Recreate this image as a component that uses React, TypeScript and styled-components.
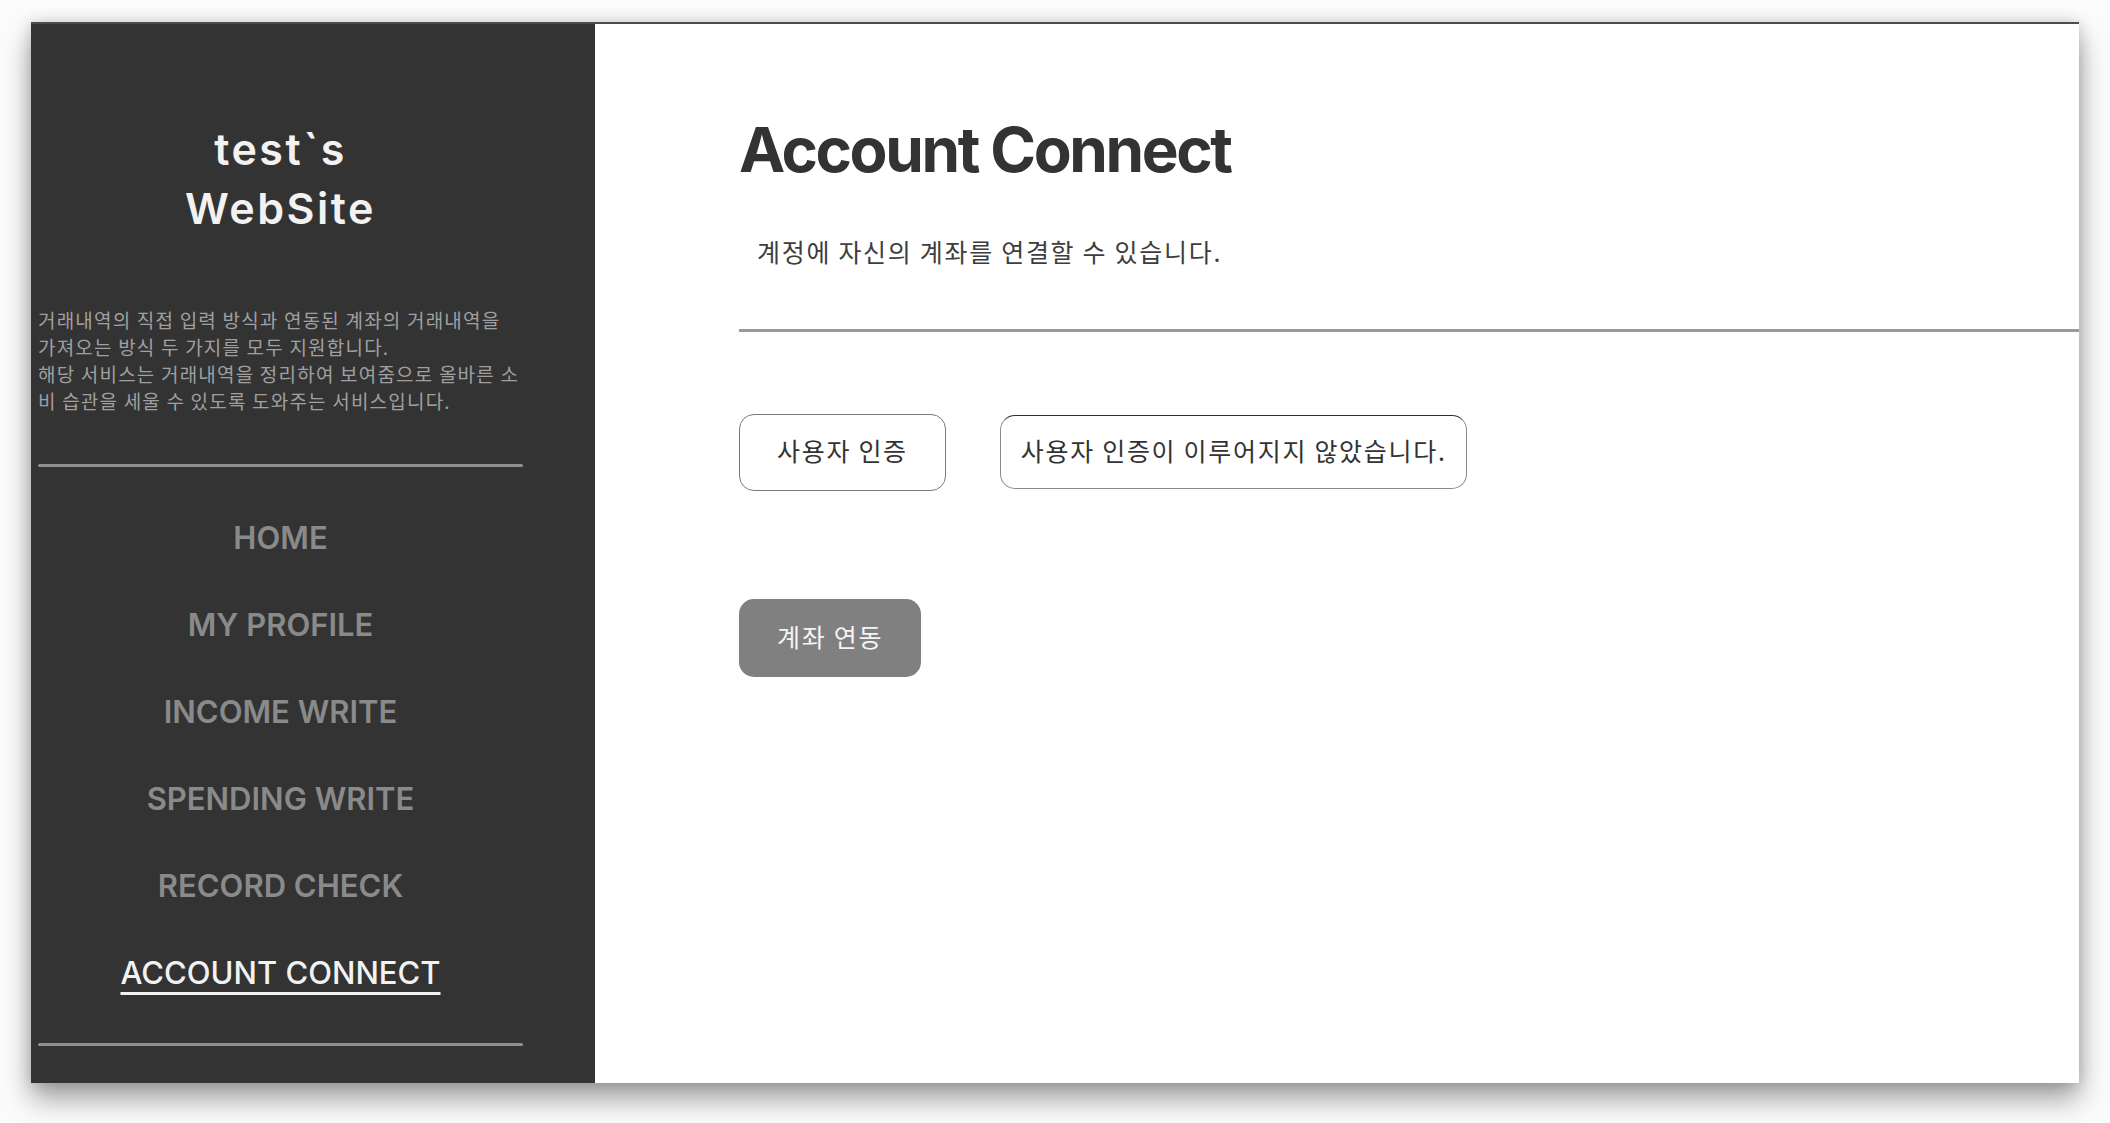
import React from "react";
import styled, { createGlobalStyle } from "styled-components";

const GlobalStyle = createGlobalStyle`
  html, body {
    margin: 0;
    padding: 0;
    background: #fbfbfb;
  }
  body {
    font-family: "Inter", "Noto Sans CJK KR", sans-serif;
  }
  * { box-sizing: border-box; }
`;

const Stage = styled.div`
  width: 2110px;
  height: 1123px;
  padding: 22px 31px 40px;
  background: #fbfbfb;
  overflow: hidden;
`;

const Window = styled.div`
  display: flex;
  height: 100%;
  border-top: 2px solid #4d4d4d;
  background: #ffffff;
  box-shadow: 0 16px 26px rgba(0, 0, 0, 0.36), 0 0 14px rgba(0, 0, 0, 0.16);
`;

const Sidebar = styled.aside`
  flex: none;
  width: 564px;
  background: #333333;
  padding: 96px 72px 0 7px;
  display: flex;
  flex-direction: column;
`;

const Brand = styled.h1`
  margin: 0;
  text-align: center;
  color: #f2f2f2;
  font-family: "Inter", sans-serif;
  font-weight: 600;
  font-size: 43px;
  line-height: 59px;
  letter-spacing: 2.5px;
`;

const Intro = styled.p`
  margin: 68px 0 0;
  width: 485px;
  color: #a0a0a0;
  font-family: "Noto Sans CJK KR", sans-serif;
  font-size: 19px;
  line-height: 27px;
  font-weight: 400;
  letter-spacing: 1.2px;
`;

const Divider = styled.hr<{ $top: number }>`
  margin: ${(p) => p.$top}px 0 0;
  width: 485px;
  height: 3px;
  border: none;
  border-radius: 2px;
  background: #8f8f8f;
`;

const NavList = styled.nav`
  display: flex;
  flex-direction: column;
  margin-top: 27px;
`;

const NavItem = styled.a<{ $active?: boolean }>`
  height: 87px;
  display: flex;
  align-items: center;
  justify-content: center;
  font-family: "Inter", sans-serif;
  font-size: 31px;
  line-height: 38px;
  font-weight: ${(p) => (p.$active ? 500 : 600)};
  color: ${(p) => (p.$active ? "#f2f2f2" : "#8a8a8a")};
  text-decoration: ${(p) => (p.$active ? "underline" : "none")};
  text-decoration-thickness: 3px;
  text-underline-offset: 8px;
  cursor: pointer;
`;

const Main = styled.main`
  flex: 1;
  background: #ffffff;
  padding: 88px 0 0 144px;
  display: flex;
  flex-direction: column;
  align-items: flex-start;
`;

const PageTitle = styled.h2`
  margin: 0;
  color: #333333;
  font-family: "Inter", sans-serif;
  font-weight: 700;
  font-size: 62px;
  line-height: 75px;
  letter-spacing: -2.4px;
`;

const Lead = styled.p`
  margin: 46px 0 0;
  padding-left: 18px;
  color: #3d3d3d;
  font-family: "Noto Sans CJK KR", sans-serif;
  font-size: 25px;
  line-height: 36px;
  letter-spacing: 1.7px;
`;

const Rule = styled.hr`
  align-self: stretch;
  margin: 60px 0 0;
  height: 3px;
  border: none;
  background: #999999;
`;

const ActionRow = styled.div`
  margin-top: 82px;
  display: flex;
  align-items: flex-start;
  gap: 54px;
`;

const OutlineButton = styled.button`
  height: 77px;
  padding: 0 37px 5px;
  border: 1px solid #7a7a7a;
  border-radius: 15px;
  background: #ffffff;
  color: #333333;
  font-family: "Noto Sans CJK KR", sans-serif;
  font-size: 25px;
  letter-spacing: 1.7px;
  cursor: pointer;
`;

const StatusField = styled.div`
  margin-top: 1px;
  height: 74px;
  padding: 0 19px 5px 20px;
  display: flex;
  align-items: center;
  border: 1px solid #8a8a8a;
  border-top-color: #2e2e2e;
  border-radius: 15px;
  color: #333333;
  font-family: "Noto Sans CJK KR", sans-serif;
  font-size: 25px;
  letter-spacing: 1.7px;
`;

const PrimaryButton = styled.button`
  margin-top: 108px;
  height: 78px;
  padding: 0 38px 5px;
  border: none;
  border-radius: 15px;
  background: #808080;
  color: #f4f4f4;
  font-family: "Noto Sans CJK KR", sans-serif;
  font-size: 25px;
  letter-spacing: 1.7px;
  cursor: pointer;
`;

const navItems = [
  "HOME",
  "MY PROFILE",
  "INCOME WRITE",
  "SPENDING WRITE",
  "RECORD CHECK",
  "ACCOUNT CONNECT",
];

export default function App() {
  return (
    <>
      <GlobalStyle />
      <Stage>
        <Window>
          <Sidebar>
            <Brand>
              test`s
              <br />
              WebSite
            </Brand>
            <Intro>
              거래내역의 직접 입력 방식과 연동된 계좌의 거래내역을 가져오는 방식 두 가지를 모두 지원합니다.
              <br />
              해당 서비스는 거래내역을 정리하여 보여줌으로 올바른 소비 습관을 세울 수 있도록 도와주는 서비스입니다.
            </Intro>
            <Divider $top={50} />
            <NavList>
              {navItems.map((item) => (
                <NavItem key={item} $active={item === "ACCOUNT CONNECT"}>
                  {item}
                </NavItem>
              ))}
            </NavList>
            <Divider $top={27} />
          </Sidebar>
          <Main>
            <PageTitle>Account Connect</PageTitle>
            <Lead>계정에 자신의 계좌를 연결할 수 있습니다.</Lead>
            <Rule />
            <ActionRow>
              <OutlineButton>사용자 인증</OutlineButton>
              <StatusField>사용자 인증이 이루어지지 않았습니다.</StatusField>
            </ActionRow>
            <PrimaryButton>계좌 연동</PrimaryButton>
          </Main>
        </Window>
      </Stage>
    </>
  );
}
